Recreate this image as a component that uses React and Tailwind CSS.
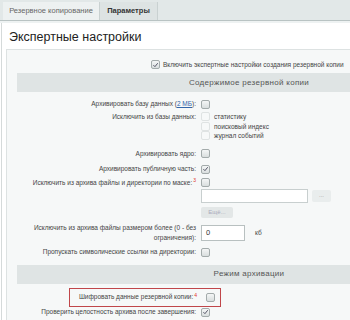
import React from 'react';

const Check = ({ checked, faint }) => (
  <span
    className={`inline-flex h-[9px] w-[9px] shrink-0 items-center justify-center rounded-[2px] border ${
      faint ? 'border-[#dfe3e3] bg-[#f7f9f9]' : 'border-[#a3abab] bg-gradient-to-b from-[#f4f6f6] to-[#d9dede]'
    }`}
  >
    {checked && (
      <svg viewBox="0 0 10 10" className="h-[8px] w-[8px]">
        <path d="M2 5.2 L4.2 7.4 L8.2 2.4" fill="none" stroke="#556" strokeWidth="1.4" />
      </svg>
    )}
  </span>
);

const Sup = ({ n }) => <sup className="ml-[1px] text-[5px] text-[#e0302a]">{n}</sup>;

function Row({ label, h, children }) {
  return (
    <div className={`grid grid-cols-[194px_1fr] items-center ${h}`}>
      <div className="whitespace-nowrap pr-[5px] text-right leading-[10px]">{label}</div>
      <div className="flex items-center gap-[4px]">{children}</div>
    </div>
  );
}

function Band({ title }) {
  return (
    <div className="ml-[10px] flex h-[19px] w-[464px] items-center justify-center bg-[#dfe4e4] text-[8px] tracking-[0.3px] text-[#555]">
      {title}
    </div>
  );
}

export default function App() {
  return (
    <div className="relative h-[320px] w-[350px] overflow-hidden bg-white font-['Liberation_Sans',Arial,sans-serif] text-[6.5px] text-[#444]">
      <div className="flex h-[21px] border-b border-[#b9c3c3] bg-[#e2e8e8] pl-[3px] pt-[2px]">
        <div className="flex w-[97px] items-center justify-center border-r border-[#c9d1d1] bg-[#edf1f1] text-[7.5px] text-[#666]">
          Резервное копирование
        </div>
        <div className="flex w-[58px] items-center justify-center border-r border-[#c9d1d1] bg-[#dde3e3] text-[7.5px] font-bold text-[#333]">
          Параметры
        </div>
      </div>
      <div className="h-[2px] bg-[#eef2f2]" />
      <div className="ml-[1px] flex flex-col border-l border-[#d5dada]">
        <div className="flex h-[26px] items-center pl-[7px] pt-[2px] text-[12.5px] text-[#222]">
          Экспертные настройки
        </div>
        <div className="ml-[4px] h-[300px] border-l border-t border-[#dde2e2] bg-[#f6f8f8]">
          <div className="flex h-[23px] items-center gap-[3px] whitespace-nowrap pl-[144px] pt-[6px]">
            <Check checked />
            <span>Включить экспертные настройки создания резервной копии</span>
          </div>
          <Band title="Содержимое резервной копии" />
          <div className="h-[5px]" />
          <Row label={<>Архивировать базу данных (<span className="text-[#3366aa] underline">2 МБ</span>):</>} h="h-[14px]">
            <Check />
          </Row>
          <div className="grid grid-cols-[194px_1fr] pt-[1px]">
            <div className="pr-[5px] text-right leading-[10px]">Исключить из базы данных:</div>
            <div className="flex flex-col leading-[9.5px]">
              <div className="flex items-center gap-[4px]"><Check faint /><span>статистику</span></div>
              <div className="flex items-center gap-[4px]"><Check faint /><span>поисковый индекс</span></div>
              <div className="flex items-center gap-[4px]"><Check faint /><span>журнал событий</span></div>
            </div>
          </div>
          <div className="h-[5px]" />
          <Row label="Архивировать ядро:" h="h-[16px]"><Check /></Row>
          <Row label="Архивировать публичную часть:" h="h-[15px]"><Check checked /></Row>
          <Row label={<>Исключить из архива файлы и директории по маске:<Sup n="3" /></>} h="h-[12px]"><Check /></Row>
          <div className="grid grid-cols-[194px_1fr]">
            <div />
            <div className="flex flex-col items-start">
              <div className="flex items-center gap-[4px]">
                <div className="h-[14px] w-[107px] border border-[#c8cfcf] bg-white" />
                <div className="flex h-[12px] w-[19px] items-center justify-center rounded-[2px] bg-[#e9eded] text-[6px] text-[#999]">...</div>
              </div>
              <div className="mt-[4px] flex h-[11px] w-[32px] items-center justify-center rounded-[2px] bg-[#e3e7e7] text-[6px] text-[#aab]">
                Ещё...
              </div>
            </div>
          </div>
          <div className="grid grid-cols-[194px_1fr] items-center pt-[5px]">
            <div className="pr-[5px] text-right leading-[10px]">
              Исключить из архива файлы размером более (0 - без
              <br />
              ограничения):
            </div>
            <div className="flex items-center gap-[10px]">
              <div className="flex h-[16px] w-[44px] items-center border border-[#b8c0c0] bg-white pl-[4px] text-[7.5px] text-[#333]">0</div>
              <span>кб</span>
            </div>
          </div>
          <Row label="Пропускать символические ссылки на директории:" h="h-[19px]"><Check /></Row>
          <div className="h-[3px]" />
          <Band title="Режим архивации" />
          <div className="h-[4px]" />
          <div className="grid grid-cols-[194px_1fr] items-center">
            <div className="flex justify-end">
              <div className="flex h-[19px] w-[132px] items-center justify-end whitespace-nowrap border-[1.5px] border-r-0 border-[#c0464a] pr-[4px]">
                Шифровать данные резервной копии:<Sup n="4" />
              </div>
            </div>
            <div className="flex h-[19px] w-[20px] items-center border-[1.5px] border-l-0 border-[#c0464a] pl-[5px]">
              <Check />
            </div>
          </div>
          <Row label="Проверить целостность архива после завершения:" h="h-[11px]"><Check checked /></Row>
        </div>
      </div>
    </div>
  );
}
